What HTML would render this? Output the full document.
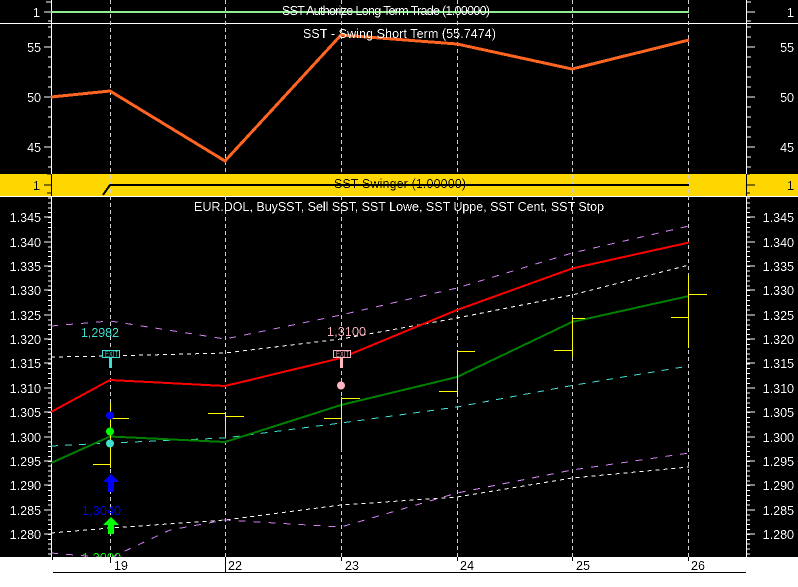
<!DOCTYPE html>
<html><head><meta charset="utf-8"><style>
html,body{margin:0;padding:0;background:#fff;width:798px;height:587px;overflow:hidden}
svg{display:block}
text{font-family:"Liberation Sans",sans-serif;font-size:12.5px}
text.x{font-size:8px}
</style></head><body>
<svg width="798" height="587" viewBox="0 0 798 587" xmlns="http://www.w3.org/2000/svg">
<defs>
<filter id="a" filterUnits="userSpaceOnUse" x="0" y="0" width="798" height="587" color-interpolation-filters="sRGB">
<feComponentTransfer><feFuncA type="discrete" tableValues="0 0 0 1 1"/></feComponentTransfer>
</filter>
</defs>
<rect width="798" height="557" fill="#000"/>
<rect y="174" width="798" height="22" fill="#ffd700"/>
<g shape-rendering="crispEdges">
<rect y="23" width="798" height="1" fill="#fff"/>
<rect y="196" width="798" height="1" fill="#fff"/>
<rect x="51" width="1" height="174" fill="#fff"/><rect x="51" y="197" width="1" height="361" fill="#fff"/>
<rect x="51" y="174" width="1" height="22" fill="#000"/>
<rect x="746" width="1" height="174" fill="#fff"/><rect x="746" y="197" width="1" height="361" fill="#fff"/>
<rect x="746" y="174" width="1" height="22" fill="#000"/>
<path d="M44 12H51M46 2H51M48 21H51M44 47H51M44 97H51M44 147H51M48 27H51M48 37H51M48 57H51M48 67H51M48 77H51M48 87H51M48 107H51M48 117H51M48 127H51M48 137H51M48 157H51M48 167H51" stroke="#fff" fill="none"/>
<path d="M747 12H755M747 2H751M747 21H751M747 47H755M747 97H755M747 147H755M747 27H751M747 37H751M747 57H751M747 67H751M747 77H751M747 87H751M747 107H751M747 117H751M747 127H751M747 137H751M747 157H751M747 167H751" stroke="#fff" fill="none"/>
<path d="M47 174H51M44 185H51M47 193H51M747 174H750M747 185H755M747 193H750" stroke="#000" fill="none"/>
<path d="M44 217H51M44 242H51M44 266H51M44 290H51M44 315H51M44 339H51M44 363H51M44 388H51M44 412H51M44 437H51M44 461H51M44 485H51M44 510H51M44 534H51" stroke="#fff" fill="none"/>
<path d="M747 217H755M747 242H755M747 266H755M747 290H755M747 315H755M747 339H755M747 363H755M747 388H755M747 412H755M747 437H755M747 461H755M747 485H755M747 510H755M747 534H755" stroke="#fff" fill="none"/>
<line x1="49.5" y1="197.5" x2="49.5" y2="557" stroke="#fff" stroke-width="3" stroke-dasharray="1 3.875"/>
<line x1="748.5" y1="197.5" x2="748.5" y2="557" stroke="#fff" stroke-width="3" stroke-dasharray="1 3.875"/>
<g stroke="#d0d0d0" stroke-dasharray="4 3">
<line x1="110.5" y1="0" x2="110.5" y2="557"/><line x1="225.5" y1="0" x2="225.5" y2="557"/><line x1="341.5" y1="0" x2="341.5" y2="557"/><line x1="457.5" y1="0" x2="457.5" y2="557"/><line x1="572.5" y1="0" x2="572.5" y2="557"/><line x1="688.5" y1="0" x2="688.5" y2="557"/>
</g>
<rect x="51" y="11" width="638" height="2" fill="#90ee90"/>
</g>
<g fill="none" shape-rendering="crispEdges">
<polyline points="103,195 110,185 689,185" stroke="#000" stroke-width="2"/>
<polyline points="51,97 110,91 225,161 341,35 457,44 572,69 689,40" stroke="#ff6420" stroke-width="3"/>
<polyline points="51,326 110,321 225,339 341,315 457,288 572,253 689,226" stroke="#d080f0" stroke-width="1" stroke-dasharray="7 8"/>
<polyline points="51,357 110,356 225,353 341,339 457,318 572,295 689,265" stroke="#fff" stroke-width="1" stroke-dasharray="4 4"/>
<polyline points="51,446 110,443 225,438 341,423 457,407 572,385.5 689,366" stroke="#40e0d0" stroke-width="1" stroke-dasharray="7 7"/>
<polyline points="51,533 110,528 225,520 341,505 457,497 572,478 689,467" stroke="#fff" stroke-width="1" stroke-dasharray="4 4"/>
<polyline points="51,553 110,558 170,530 225,520 341,527 457,493 572,470 689,453" stroke="#d080f0" stroke-width="1" stroke-dasharray="7 8"/>
<polyline points="51,412 110,380 225,386 341,358 457,310 572,268.5 689,242.5" stroke="#ff0000" stroke-width="2"/>
<polyline points="51,463 110,436.5 225,442 341,405 457,377 572,322 689,296" stroke="#008000" stroke-width="2"/>
</g>
<path shape-rendering="crispEdges" stroke="#ffff00" fill="none" d="M110.5 403V468M93 464.5H110M111 418.5H129M225.5 412V434M208 413.5H225M226 416.5H244M341.5 397V450M324 418.5H341M342 398.5H360M457.5 350V397M439 391.5H457M458 351.5H475M572.5 317V357M554 350.5H572M573 318.5H585M688.5 275V348M671 317.5H688M689 294.5H707"/>
<g shape-rendering="crispEdges">
<rect x="102.5" y="350.5" width="17" height="7" fill="#000" stroke="#40e0d0"/>
<rect x="109" y="358" width="3" height="10" fill="#40e0d0"/>
<rect x="333.5" y="350.5" width="17" height="7" fill="#000" stroke="#ffb6c1"/>
<rect x="340" y="358" width="3" height="10" fill="#ffb6c1"/>
<rect x="108" y="481" width="6" height="11" fill="#0000ff"/>
<rect x="108" y="525" width="6" height="9" fill="#00ff00"/>
</g>
<polygon points="111,474 119,482 103,482" fill="#0000ff"/>
<polygon points="111,517 119,525 103,525" fill="#00ff00"/>
<circle cx="110" cy="415.5" r="4" fill="#0000ff"/>
<circle cx="110" cy="431.5" r="4" fill="#00ff00"/>
<circle cx="110" cy="443.5" r="4" fill="#40e0d0"/>
<circle cx="341" cy="385.5" r="4" fill="#ffb6c1"/>

<g filter="url(#a)">
<text class="x" x="105" y="357" fill="#40e0d0" textLength="13" lengthAdjust="spacingAndGlyphs">EXIT</text>
<text class="x" x="336" y="357" fill="#ffb6c1" textLength="13" lengthAdjust="spacingAndGlyphs">EXIT</text>
<text x="81" y="337" fill="#40e0d0" textLength="38" lengthAdjust="spacing">1,2982</text>
<text x="327" y="336" fill="#ffb6c1" textLength="39" lengthAdjust="spacing">1,3100</text>
<text x="82" y="515" fill="#0000ff" textLength="39" lengthAdjust="spacing">1,3040</text>
<text x="82" y="562" fill="#00ff00" textLength="39" lengthAdjust="spacing">1,3000</text>

<text x="282" y="15" fill="#fff" textLength="208" lengthAdjust="spacing">SST Authorize Long Term Trade (1.00000)</text>
<text x="303" y="38" fill="#fff" textLength="193" lengthAdjust="spacing">SST - Swing Short Term  (55.7474)</text>
<text x="334" y="188" fill="#000" textLength="132" lengthAdjust="spacing">SST Swinger (1.00000)</text>
<text x="194" y="211" fill="#fff" textLength="410" lengthAdjust="spacing">EUR.DOL, BuySST, Sell SST, SST Lowe, SST Uppe, SST Cent, SST Stop</text>

<g fill="#fff" text-anchor="end">
<text x="40" y="17">1</text><text x="41" y="52">55</text><text x="41" y="102">50</text><text x="41" y="152">45</text>
<text x="41" y="222">1.345</text><text x="41" y="247">1.340</text><text x="41" y="271">1.335</text><text x="41" y="295">1.330</text><text x="41" y="320">1.325</text><text x="41" y="344">1.320</text><text x="41" y="368">1.315</text><text x="41" y="393">1.310</text><text x="41" y="417">1.305</text><text x="41" y="442">1.300</text><text x="41" y="466">1.295</text><text x="41" y="490">1.290</text><text x="41" y="515">1.285</text><text x="41" y="539">1.280</text>
<text x="794" y="17">1</text><text x="794" y="52">55</text><text x="794" y="102">50</text><text x="794" y="152">45</text>
<text x="794" y="222">1.345</text><text x="794" y="247">1.340</text><text x="794" y="271">1.335</text><text x="794" y="295">1.330</text><text x="794" y="320">1.325</text><text x="794" y="344">1.320</text><text x="794" y="368">1.315</text><text x="794" y="393">1.310</text><text x="794" y="417">1.305</text><text x="794" y="442">1.300</text><text x="794" y="466">1.295</text><text x="794" y="490">1.290</text><text x="794" y="515">1.285</text><text x="794" y="539">1.280</text>
</g>
<text x="40" y="190" fill="#000" text-anchor="end">1</text>
<text x="794" y="190" fill="#000" text-anchor="end">1</text>
</g>

<rect y="557" width="798" height="30" fill="#fff"/>
<g shape-rendering="crispEdges" stroke="#000" fill="none">
<path d="M53 572.5H746M52.5 557V560M110.5 557V563M225.5 557V572M341.5 557V561M457.5 557V561M572.5 557V561M688.5 557V561"/>
</g>
<g fill="#000" filter="url(#a)">
<text x="114" y="570">19</text><text x="228" y="570">22</text><text x="345" y="570">23</text><text x="460" y="570">24</text><text x="576" y="570">25</text><text x="691" y="570">26</text>
</g>
</svg>
</body></html>
